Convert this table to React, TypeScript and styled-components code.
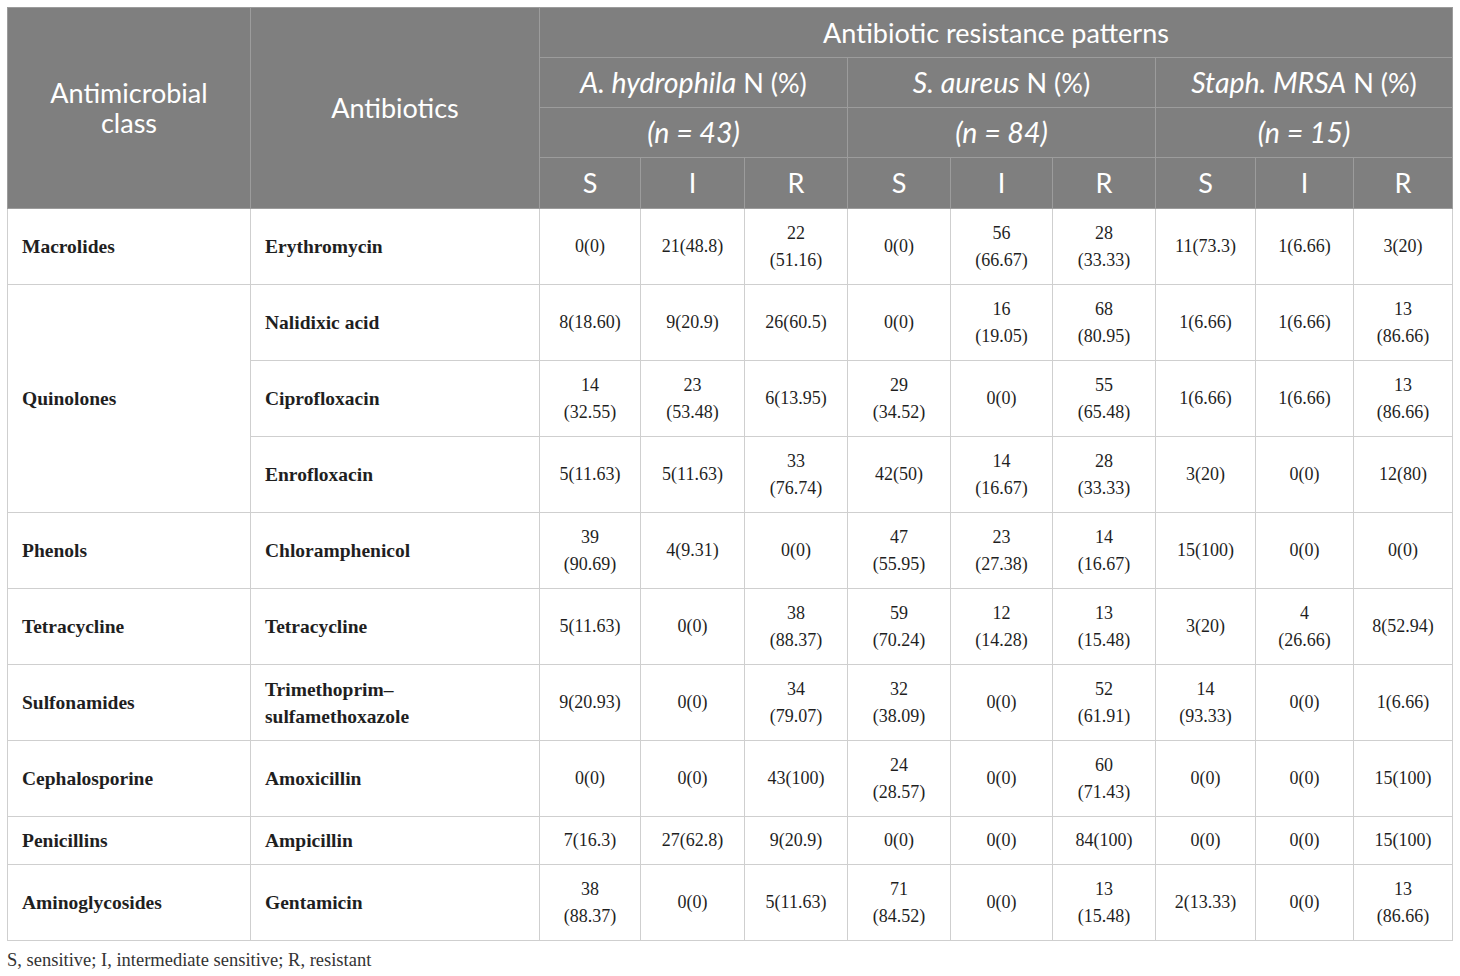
import React from "react";
import styled, { createGlobalStyle } from "styled-components";

const GlobalStyle = createGlobalStyle`
  html, body { margin: 0; padding: 0; background: #ffffff; }
  body { font-family: "Liberation Serif", "Times New Roman", serif; color: #222; }
`;

const Page = styled.div`
  padding: 7px 7px 0 7px;
  width: 1446px;
`;

const Table = styled.table`
  border-collapse: collapse;
  table-layout: fixed;
  width: 1446px;
`;

const HeadCell = styled.th`
  background: #7f7f7f;
  color: #ffffff;
  font-family: "Lato", "Open Sans", sans-serif;
  font-weight: normal;
  font-size: 27px;
  line-height: 30px;
  height: 49px;
  padding: 0 4px;
  text-align: center;
  vertical-align: middle;
  border: 1px solid #9c9c9c;
  white-space: nowrap;
`;

const ItalicText = styled.span`
  font-style: italic;
  font-size: 28.5px;
`;

const ClassCell = styled.td`
  font-weight: bold;
  font-size: 19.5px;
  line-height: 27px;
  padding: 0 8px 0 14px;
  text-align: left;
  vertical-align: middle;
  border: 1px solid #cfcfcf;
  color: #1f1f1f;
`;

const DataCell = styled.td`
  font-size: 18px;
  line-height: 27px;
  padding: 0 4px;
  text-align: center;
  vertical-align: middle;
  border: 1px solid #cfcfcf;
  color: #1f1f1f;
`;

const Row = styled.tr<{ $h: number }>`
  height: ${(p) => p.$h}px;
`;

const Note = styled.p`
  margin: 7px 0 0 0;
  font-size: 18.5px;
  line-height: 24px;
  color: #333;
`;

const widths = [243, 289, 101, 104, 103, 103, 102, 103, 100, 98, 99];

type R = { cls?: string; span?: number; drug: React.ReactNode; vals: React.ReactNode[]; h: number };

const two = (a: string, b: string) => (
  <>
    {a}
    <br />
    {b}
  </>
);

const rows: R[] = [
  {
    cls: "Macrolides",
    drug: "Erythromycin",
    vals: ["0(0)", "21(48.8)", two("22", "(51.16)"), "0(0)", two("56", "(66.67)"), two("28", "(33.33)"), "11(73.3)", "1(6.66)", "3(20)"],
    h: 76,
  },
  {
    cls: "Quinolones",
    span: 3,
    drug: "Nalidixic acid",
    vals: ["8(18.60)", "9(20.9)", "26(60.5)", "0(0)", two("16", "(19.05)"), two("68", "(80.95)"), "1(6.66)", "1(6.66)", two("13", "(86.66)")],
    h: 76,
  },
  {
    drug: "Ciprofloxacin",
    vals: [two("14", "(32.55)"), two("23", "(53.48)"), "6(13.95)", two("29", "(34.52)"), "0(0)", two("55", "(65.48)"), "1(6.66)", "1(6.66)", two("13", "(86.66)")],
    h: 76,
  },
  {
    drug: "Enrofloxacin",
    vals: ["5(11.63)", "5(11.63)", two("33", "(76.74)"), "42(50)", two("14", "(16.67)"), two("28", "(33.33)"), "3(20)", "0(0)", "12(80)"],
    h: 76,
  },
  {
    cls: "Phenols",
    drug: "Chloramphenicol",
    vals: [two("39", "(90.69)"), "4(9.31)", "0(0)", two("47", "(55.95)"), two("23", "(27.38)"), two("14", "(16.67)"), "15(100)", "0(0)", "0(0)"],
    h: 76,
  },
  {
    cls: "Tetracycline",
    drug: "Tetracycline",
    vals: ["5(11.63)", "0(0)", two("38", "(88.37)"), two("59", "(70.24)"), two("12", "(14.28)"), two("13", "(15.48)"), "3(20)", two("4", "(26.66)"), "8(52.94)"],
    h: 76,
  },
  {
    cls: "Sulfonamides",
    drug: two("Trimethoprim–", "sulfamethoxazole"),
    vals: ["9(20.93)", "0(0)", two("34", "(79.07)"), two("32", "(38.09)"), "0(0)", two("52", "(61.91)"), two("14", "(93.33)"), "0(0)", "1(6.66)"],
    h: 76,
  },
  {
    cls: "Cephalosporine",
    drug: "Amoxicillin",
    vals: ["0(0)", "0(0)", "43(100)", two("24", "(28.57)"), "0(0)", two("60", "(71.43)"), "0(0)", "0(0)", "15(100)"],
    h: 76,
  },
  {
    cls: "Penicillins",
    drug: "Ampicillin",
    vals: ["7(16.3)", "27(62.8)", "9(20.9)", "0(0)", "0(0)", "84(100)", "0(0)", "0(0)", "15(100)"],
    h: 48,
  },
  {
    cls: "Aminoglycosides",
    drug: "Gentamicin",
    vals: [two("38", "(88.37)"), "0(0)", "5(11.63)", two("71", "(84.52)"), "0(0)", two("13", "(15.48)"), "2(13.33)", "0(0)", two("13", "(86.66)")],
    h: 76,
  },
];

const species = [
  { name: "A. hydrophila", n: "43" },
  { name: "S. aureus", n: "84" },
  { name: "Staph. MRSA", n: "15" },
];

export default function App() {
  return (
    <Page>
      <GlobalStyle />
      <Table>
        <colgroup>
          {widths.map((w, i) => (
            <col key={i} style={{ width: w }} />
          ))}
        </colgroup>
        <thead>
          <Row $h={50}>
            <HeadCell rowSpan={4}>
              Antimicrobial
              <br />
              class
            </HeadCell>
            <HeadCell rowSpan={4}>Antibiotics</HeadCell>
            <HeadCell colSpan={9}>Antibiotic resistance patterns</HeadCell>
          </Row>
          <Row $h={50}>
            {species.map((s) => (
              <HeadCell key={s.name} colSpan={3}>
                <ItalicText>{s.name}</ItalicText> N (%)
              </HeadCell>
            ))}
          </Row>
          <Row $h={50}>
            {species.map((s) => (
              <HeadCell key={s.name} colSpan={3}>
                <ItalicText>(n = {s.n})</ItalicText>
              </HeadCell>
            ))}
          </Row>
          <Row $h={51}>
            {species.flatMap((s) =>
              ["S", "I", "R"].map((l) => <HeadCell key={s.name + l}>{l}</HeadCell>)
            )}
          </Row>
        </thead>
        <tbody>
          {rows.map((r, i) => (
            <Row key={i} $h={r.h}>
              {r.cls && <ClassCell rowSpan={r.span ?? 1}>{r.cls}</ClassCell>}
              <ClassCell>{r.drug}</ClassCell>
              {r.vals.map((v, j) => (
                <DataCell key={j}>{v}</DataCell>
              ))}
            </Row>
          ))}
        </tbody>
      </Table>
      <Note>S, sensitive; I, intermediate sensitive; R, resistant</Note>
    </Page>
  );
}
